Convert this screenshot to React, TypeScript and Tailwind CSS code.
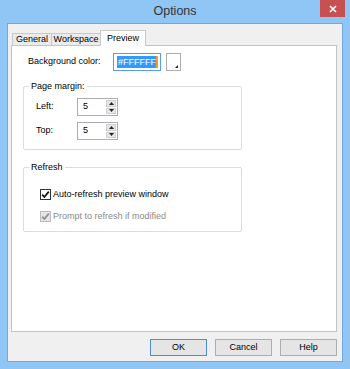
import React from "react";

const font = { fontFamily: '"Liberation Sans", Arial, sans-serif' };

function Spin({ value }: { value: string }) {
  return (
    <div className="flex h-[18px] w-[41px] border border-[#abadb3] bg-white">
      <div className="flex flex-1 items-center pl-[5px] text-[9px] text-black">{value}</div>
      <div className="flex w-[12px] flex-col gap-[1px] p-[1px]">
        <div className="flex flex-1 items-center justify-center bg-[#e6e6e6] border border-[#d0d0d0]">
          <svg width="5" height="3" viewBox="0 0 5 3">
            <polygon points="2.5,0 5,3 0,3" fill="#222" />
          </svg>
        </div>
        <div className="flex flex-1 items-center justify-center bg-[#e6e6e6] border border-[#d0d0d0]">
          <svg width="5" height="3" viewBox="0 0 5 3">
            <polygon points="0,0 5,0 2.5,3" fill="#222" />
          </svg>
        </div>
      </div>
    </div>
  );
}

function Check({ label, disabled }: { label: string; disabled?: boolean }) {
  return (
    <div className="flex h-[13px] items-center">
      <div
        className={`flex h-[11px] w-[11px] items-center justify-center border ${
          disabled ? "border-[#bcbcbc] bg-[#e6e6e6]" : "border-[#333] bg-white"
        }`}
      >
        <svg width="9" height="9" viewBox="0 0 9 9">
          <polyline
            points="1.2,4.6 3.4,7 7.8,1.6"
            fill="none"
            stroke={disabled ? "#8d8d8d" : "#111"}
            strokeWidth="1.7"
          />
        </svg>
      </div>
      <span className={`ml-[2px] text-[9px] ${disabled ? "text-[#8a8a8a]" : "text-black"}`}>{label}</span>
    </div>
  );
}

function Btn({ children, primary }: { children: React.ReactNode; primary?: boolean }) {
  return (
    <button
      className={`h-[17px] w-[57px] text-[9px] text-black bg-[#e5e5e5] border ${
        primary ? "border-[#4a90d6]" : "border-[#adadad]"
      }`}
    >
      {children}
    </button>
  );
}

export default function App() {
  return (
    <div className="flex h-[369px] w-[350px] flex-col bg-[#8fc6f6]" style={font}>
      {/* Title bar */}
      <div className="relative flex h-[23px] items-center justify-center">
        <span className="text-[12.5px] text-[#333] pb-[1px]">Options</span>
        <div className="absolute right-[5px] top-0 flex h-[17px] w-[25px] items-center justify-center bg-[#c75050]">
          <svg width="8" height="8" viewBox="0 0 8 8">
            <path d="M1 1 L7 7 M7 1 L1 7" stroke="#fff" strokeWidth="1.6" />
          </svg>
        </div>
      </div>

      {/* Client */}
      <div className="mx-[7px] mb-[7px] flex flex-1 flex-col border border-[#6fa9e2] bg-[#f0f0f0] pl-[3px] pr-[5px] pt-[6px] pb-[5px]">
        {/* Tabs */}
        <div className="relative z-10 flex h-[15px] items-end pl-[1px] text-[9px]">
          <div className="flex h-[12px] w-[40px] items-center justify-center border border-b-0 border-[#c9c9c9] bg-[#ebebeb] text-black">
            General
          </div>
          <div className="flex h-[12px] w-[49px] items-center justify-center border border-b-0 border-l-0 border-[#c9c9c9] bg-[#ebebeb] text-black">
            Workspace
          </div>
          <div className="-mb-px -ml-px flex h-[16px] w-[46px] items-start justify-center border border-b-0 border-[#c9c9c9] bg-white pt-[1px] text-black">
            Preview
          </div>
        </div>

        {/* Pane */}
        <div className="flex flex-1 flex-col border border-[#c3c3c3] bg-white pt-[7px] pl-[11px]">
          <div className="flex h-[18px] items-center">
            <span className="w-[90px] pl-[5px] text-[9px] text-black">Background color:</span>
            <div className="flex h-[18px] w-[48px] items-center border border-[#569de5] bg-white pl-[3px]">
              <span className="bg-[#3399ff] text-[9px] leading-[12px] text-white pl-[1px]">#FFFFFF</span>
              <span className="h-[12px] w-[2px] bg-[#f39a2a]" />
            </div>
            <div className="relative ml-[5px] h-[18px] w-[15px] border border-[#adadad] bg-white">
              <svg className="absolute bottom-[2px] right-[2px]" width="3" height="3" viewBox="0 0 3 3">
                <polygon points="3,0 3,3 0,3" fill="#222" />
              </svg>
            </div>
          </div>

          <fieldset className="mt-[10px] w-[219px] rounded-[2px] border border-[#dcdcdc] pb-[9px]">
            <legend className="ml-[5px] px-[2px] text-[9px] leading-[11px] text-black">Page margin:</legend>
            <div className="pl-[12px]">
              <div className="mt-[6px] flex items-center">
                <span className="w-[41px] text-[9px] text-black">Left:</span>
                <Spin value="5" />
              </div>
              <div className="mt-[6px] flex items-center">
                <span className="w-[41px] text-[9px] text-black">Top:</span>
                <Spin value="5" />
              </div>
            </div>
          </fieldset>

          <fieldset className="mt-[12px] w-[219px] rounded-[2px] border border-[#dcdcdc] pb-[8px]">
            <legend className="ml-[5px] px-[2px] text-[9px] leading-[11px] text-black">Refresh</legend>
            <div className="pl-[16px]">
              <div className="mt-[15px]">
                <Check label="Auto-refresh preview window" />
              </div>
              <div className="mt-[9px]">
                <Check label="Prompt to refresh if modified" disabled />
              </div>
            </div>
          </fieldset>
        </div>

        {/* Buttons */}
        <div className="mt-[7px] flex justify-end gap-[8px]">
          <Btn primary>OK</Btn>
          <Btn>Cancel</Btn>
          <Btn>Help</Btn>
        </div>
      </div>
    </div>
  );
}
